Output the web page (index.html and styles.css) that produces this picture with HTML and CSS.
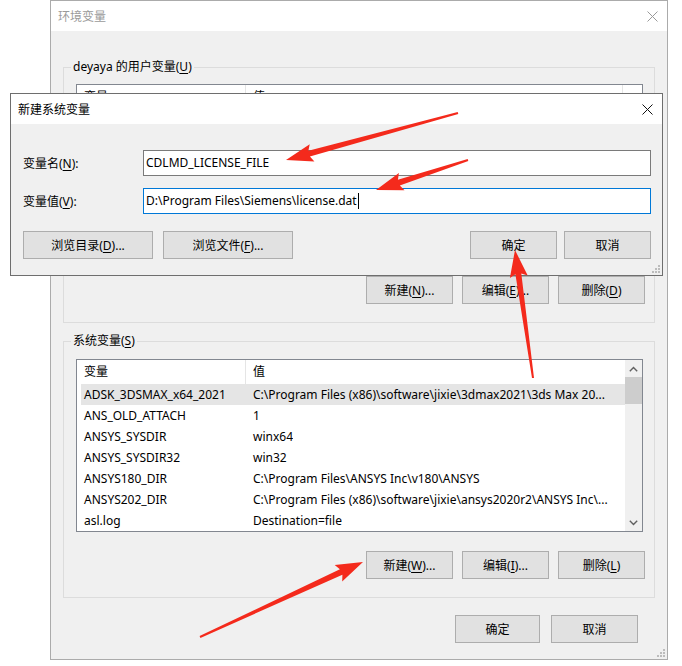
FILE: index.html
```html
<!DOCTYPE html>
<html lang="zh-CN">
<head>
    <meta charset="UTF-8">
    <meta name="viewport" content="width=device-width, initial-scale=1.0">
    <title>环境变量</title>
    <link rel="stylesheet" href="styles.css">
</head>
<body>
<div class="screen">

    <!-- main environment variables window -->
    <div class="window env">
        <div class="titlebar">
            <span>环境变量</span>
            <span class="close">
                <svg width="11" height="11" viewBox="0 0 11 11"><path d="M0.5 0.5 L10.5 10.5 M10.5 0.5 L0.5 10.5" stroke="#9a9a9a" stroke-width="1" fill="none"/></svg>
            </span>
        </div>
        <div class="client">
            <fieldset class="group">
                <legend>deyaya 的用户变量(<u>U</u>)</legend>
                <div class="list">
                    <div class="list-main">
                        <div class="list-head user-head">
                            <span class="col-name">变量</span>
                            <span class="col-value">值</span>
                        </div>
                    </div>
                </div>
                <div class="btn-row">
                    <button class="btn">新建(<u>N</u>)...</button>
                    <button class="btn">编辑(<u>E</u>)...</button>
                    <button class="btn">删除(<u>D</u>)</button>
                </div>
            </fieldset>

            <fieldset class="group system">
                <legend>系统变量(<u>S</u>)</legend>
                <div class="list">
                    <div class="list-main">
                        <div class="list-head">
                            <span class="col-name">变量</span>
                            <span class="col-value">值</span>
                        </div>
                        <div class="row selected"><span class="col-name">ADSK_3DSMAX_x64_2021</span><span class="col-value">C:\Program Files (x86)\software\jixie\3dmax2021\3ds Max 20...</span></div>
                        <div class="row"><span class="col-name">ANS_OLD_ATTACH</span><span class="col-value">1</span></div>
                        <div class="row"><span class="col-name">ANSYS_SYSDIR</span><span class="col-value">winx64</span></div>
                        <div class="row"><span class="col-name">ANSYS_SYSDIR32</span><span class="col-value">win32</span></div>
                        <div class="row"><span class="col-name">ANSYS180_DIR</span><span class="col-value">C:\Program Files\ANSYS Inc\v180\ANSYS</span></div>
                        <div class="row"><span class="col-name">ANSYS202_DIR</span><span class="col-value">C:\Program Files (x86)\software\jixie\ansys2020r2\ANSYS Inc\...</span></div>
                        <div class="row"><span class="col-name">asl.log</span><span class="col-value">Destination=file</span></div>
                    </div>
                    <div class="scrollbar">
                        <div class="sb-btn">
                            <svg width="9" height="6" viewBox="0 0 9 6"><path d="M0.8 5.2 L4.5 1.5 L8.2 5.2" stroke="#606060" stroke-width="1.4" fill="none"/></svg>
                        </div>
                        <div class="sb-thumb"></div>
                        <div class="sb-track"></div>
                        <div class="sb-btn">
                            <svg width="9" height="6" viewBox="0 0 9 6"><path d="M0.8 0.8 L4.5 4.5 L8.2 0.8" stroke="#606060" stroke-width="1.4" fill="none"/></svg>
                        </div>
                    </div>
                </div>
                <div class="btn-row">
                    <button class="btn">新建(<u>W</u>)...</button>
                    <button class="btn">编辑(<u>I</u>)...</button>
                    <button class="btn">删除(<u>L</u>)</button>
                </div>
            </fieldset>

            <div class="footer">
                <button class="btn">确定</button>
                <button class="btn">取消</button>
            </div>
        </div>
        <svg class="grip" width="8" height="8" viewBox="0 0 8 8">
            <rect x="6" y="0" width="2" height="2"/><rect x="3" y="3" width="2" height="2"/><rect x="6" y="3" width="2" height="2"/>
            <rect x="0" y="6" width="2" height="2"/><rect x="3" y="6" width="2" height="2"/><rect x="6" y="6" width="2" height="2"/>
        </svg>
    </div>

    <!-- new system variable dialog -->
    <div class="window dialog">
        <div class="titlebar">
            <span>新建系统变量</span>
            <span class="close">
                <svg width="11" height="11" viewBox="0 0 11 11"><path d="M0.5 0.5 L10.5 10.5 M10.5 0.5 L0.5 10.5" stroke="#111" stroke-width="1" fill="none"/></svg>
            </span>
        </div>
        <div class="dialog-body">
            <div class="field">
                <label>变量名(<u>N</u>):</label>
                <div class="textbox">CDLMD_LICENSE_FILE</div>
            </div>
            <div class="field">
                <label>变量值(<u>V</u>):</label>
                <div class="textbox focused">D:\Program Files\Siemens\license.dat<span class="caret"></span></div>
            </div>
            <div class="dialog-buttons">
                <button class="btn wide">浏览目录(<u>D</u>)...</button>
                <button class="btn wide">浏览文件(<u>F</u>)...</button>
                <span class="spacer"></span>
                <button class="btn">确定</button>
                <button class="btn">取消</button>
            </div>
        </div>
        <svg class="grip" width="8" height="8" viewBox="0 0 8 8">
            <rect x="6" y="0" width="2" height="2"/><rect x="3" y="3" width="2" height="2"/><rect x="6" y="3" width="2" height="2"/>
            <rect x="0" y="6" width="2" height="2"/><rect x="3" y="6" width="2" height="2"/><rect x="6" y="6" width="2" height="2"/>
        </svg>
    </div>

    <!-- red pointer arrows drawn on top -->
    <svg class="marks" width="682" height="666" viewBox="0 0 682 666">
        <polygon points="457.7,112 308.4,150.8 309.7,144.2 286,160 314.4,161.6 309.9,156.6 458.3,114"/>
        <polygon points="467.7,159 397.9,179.7 398.9,173.1 376,190 404.5,190.2 399.8,185.4 468.3,161"/>
        <polygon points="534,377.9 521.3,273.4 527.7,275.5 515,250 509.9,278 515.4,274.2 532,378.1"/>
        <polygon points="200.4,637.9 342.4,574.8 342.2,581.5 363,562 334.7,565.1 339.9,569.3 199.6,636.1"/>
    </svg>
</div>
</body>
</html>
```

FILE: styles.css
```css
* {
    box-sizing: border-box;
}
body {
    margin: 0;
    background: #fff;
    font-family: "Noto Sans", "Noto Sans CJK SC", sans-serif;
    font-size: 12px;
    color: #000;
}
u {
    text-decoration-thickness: 1px;
    text-underline-offset: 2px;
}
.screen {
    position: relative;
    width: 682px;
    height: 666px;
    overflow: hidden;
}

/* windows */
.window {
    display: flex;
    flex-direction: column;
    background: #f0f0f0;
}
.env {
    position: relative;
    width: 618px;
    height: 660px;
    margin-left: 50px;
    border: 1px solid #ababab;
}
.dialog {
    position: absolute;
    left: 10px;
    top: 93px;
    width: 653px;
    height: 183px;
    border: 1px solid #6e6e6e;
}
.titlebar {
    flex-shrink: 0;
    height: 30px;
    background: #fff;
    display: flex;
    align-items: center;
    justify-content: space-between;
    padding-left: 7px;
}
.env .titlebar {
    color: #9a9a9a;
}
.close {
    width: 30px;
    height: 30px;
    display: flex;
    align-items: center;
    justify-content: center;
}
.grip {
    position: absolute;
    right: 2px;
    bottom: 2px;
    fill: #bcbcbc;
}

/* main window content */
.client {
    flex: 1;
    padding: 28px 12px 0 12px;
}
.group {
    margin: 0;
    padding: 9px 11px 18px 12px;
    border: 1px solid #dcdcdc;
    min-width: 0;
}
.group legend {
    margin-left: -5px;
    padding: 0 2px;
    line-height: 16px;
}
.system {
    margin-top: 10px;
    padding-top: 10px;
}
.btn-row {
    display: flex;
    justify-content: flex-end;
    gap: 9px;
    margin-top: 19px;
    margin-right: -2px;
}
.footer {
    display: flex;
    justify-content: flex-end;
    gap: 11px;
    margin-top: 17px;
    margin-right: 17px;
}
.footer .btn:first-child {
    width: 85px;
}
.btn {
    width: 87px;
    height: 28px;
    padding: 0;
    border: 1px solid #adadad;
    background: #e1e1e1;
    font-family: inherit;
    font-size: 12px;
    color: #000;
}
.btn.wide {
    width: 130px;
}

/* list view */
.list {
    display: flex;
    height: 173px;
    border: 1px solid #828790;
    background: #fff;
}
.list-main {
    flex: 1;
    min-width: 0;
    overflow: hidden;
}
.list-head {
    display: flex;
    height: 24px;
    line-height: 24px;
}
.list-head .col-name {
    width: 169px;
    padding-left: 7px;
    border-right: 1px solid #e5e5e5;
}
.list-head .col-value {
    padding-left: 7px;
}
.user-head .col-value {
    width: 377px;
    border-right: 1px solid #e5e5e5;
}
.row {
    display: flex;
    height: 21px;
    line-height: 21px;
    margin-left: 4px;
    white-space: nowrap;
}
.row.selected {
    background: #e5e5e5;
}
.row .col-name {
    width: 165px;
    flex-shrink: 0;
    padding-left: 3px;
}
.row .col-value {
    padding-left: 7px;
    overflow: hidden;
}
.scrollbar {
    width: 17px;
    display: flex;
    flex-direction: column;
    background: #f0f0f0;
}
.sb-btn {
    height: 17px;
    display: flex;
    align-items: center;
    justify-content: center;
}
.sb-thumb {
    height: 27px;
    background: #cdcdcd;
}
.sb-track {
    flex: 1;
}

/* dialog content */
.dialog-body {
    flex: 1;
    padding: 26px 11px 0 12px;
}
.field {
    display: flex;
    align-items: center;
    margin-bottom: 12px;
}
.field label {
    width: 120px;
}
.textbox {
    flex: 1;
    height: 26px;
    line-height: 24px;
    padding-left: 2px;
    border: 1px solid #7a7a7a;
    background: #fff;
    display: flex;
    align-items: center;
}
.textbox.focused {
    border-color: #0078d7;
}
.caret {
    width: 1px;
    height: 16px;
    margin-left: 1px;
    background: #000;
}
.dialog-buttons {
    display: flex;
    gap: 10px;
    margin-top: 17px;
}
.dialog-buttons .btn:last-child {
    margin-left: -3px;
}
.spacer {
    flex: 1;
}

/* annotation arrows */
.marks {
    position: absolute;
    left: 0;
    top: 0;
    fill: #f42a1c;
    pointer-events: none;
}
```
